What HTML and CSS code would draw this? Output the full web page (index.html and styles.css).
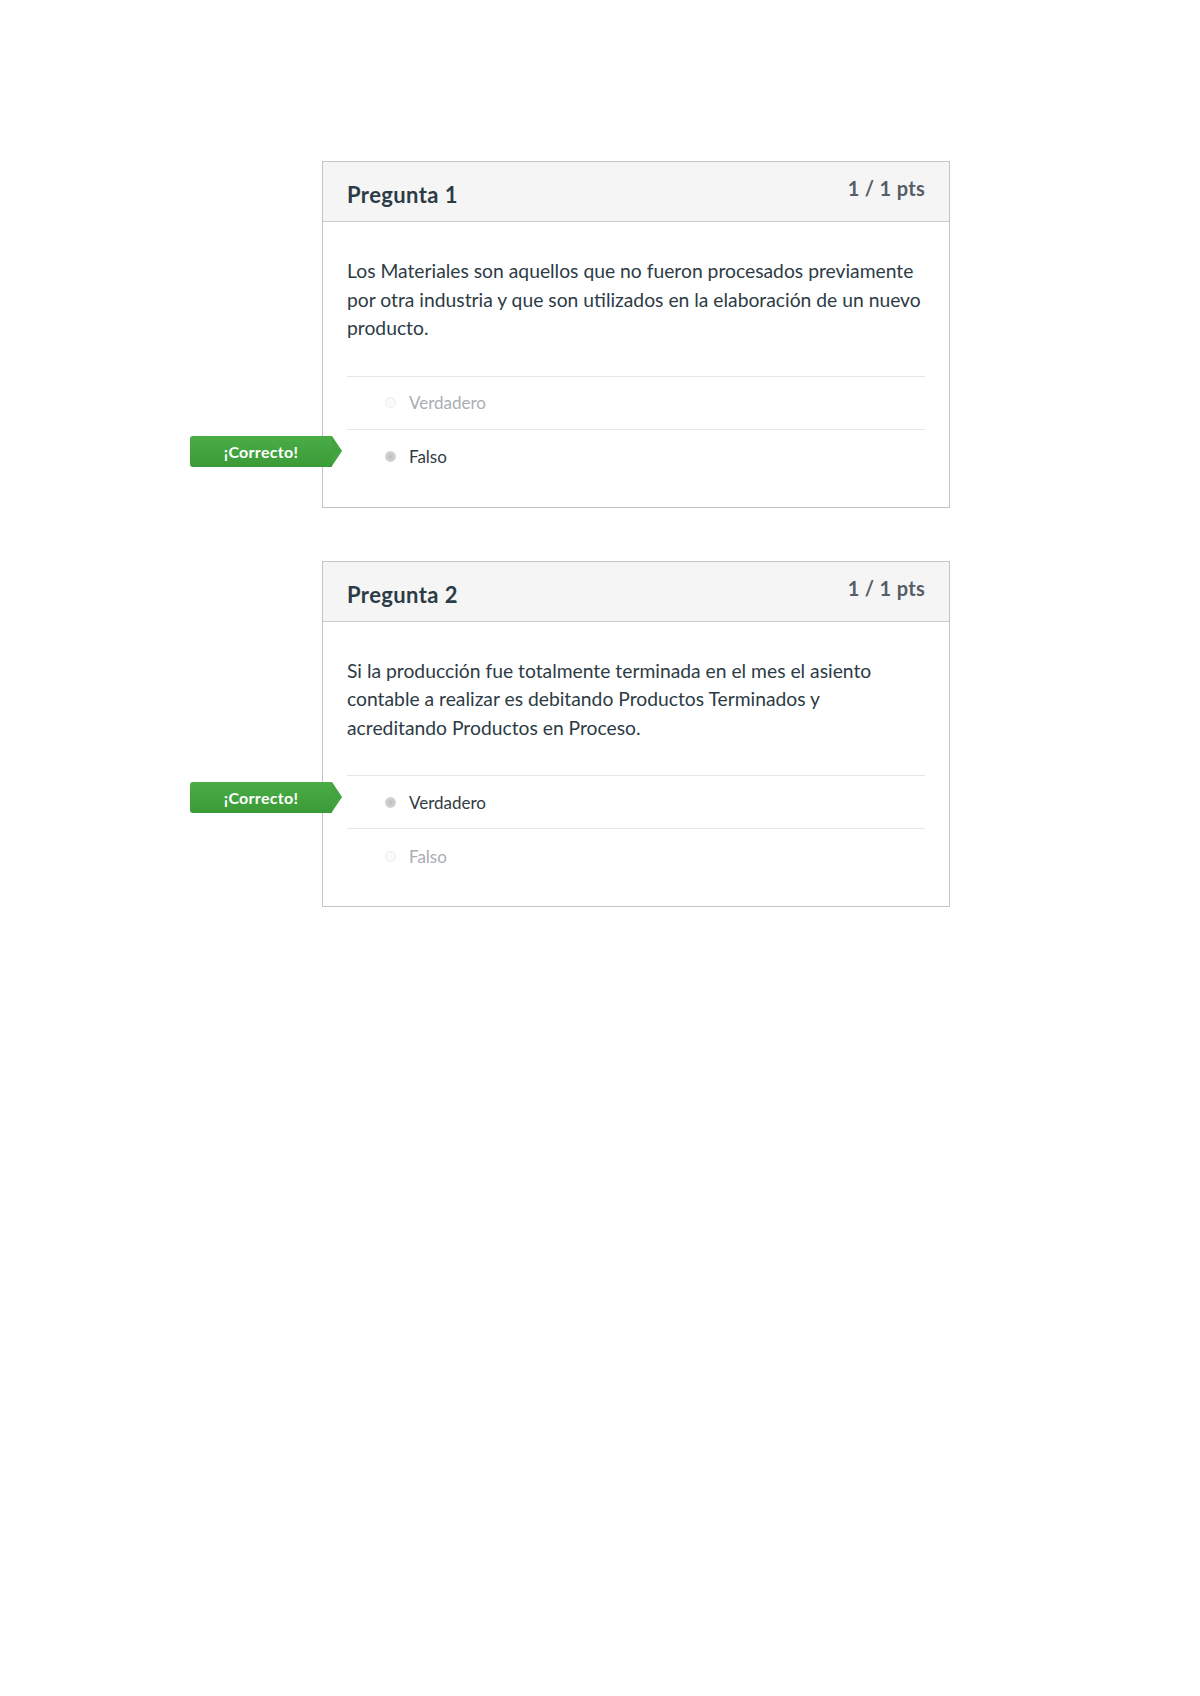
FILE: index.html
```html
<!DOCTYPE html>
<html lang="es">
<head>
<meta charset="utf-8">
<title>Preguntas</title>
<link rel="stylesheet" href="styles.css">
</head>
<body>
<main class="quiz">
  <section class="question">
    <header class="q-header">
      <h2 class="q-title">Pregunta 1</h2>
      <div class="q-points">1 / 1 pts</div>
    </header>
    <div class="q-body">
      <p class="q-text">Los Materiales son aquellos que no fueron procesados previamente por otra industria y que son utilizados en la elaboración de un nuevo producto.</p>
      <ul class="answers">
        <li class="answer"><span class="radio"></span><span class="label muted">Verdadero</span></li>
        <li class="answer selected"><span class="badge">¡Correcto!</span><span class="radio checked"></span><span class="label">Falso</span></li>
      </ul>
    </div>
  </section>
  <section class="question">
    <header class="q-header">
      <h2 class="q-title">Pregunta 2</h2>
      <div class="q-points">1 / 1 pts</div>
    </header>
    <div class="q-body">
      <p class="q-text">Si la producción fue totalmente terminada en el mes el asiento contable a realizar es debitando Productos Terminados y<br>acreditando Productos en Proceso.</p>
      <ul class="answers">
        <li class="answer selected"><span class="badge">¡Correcto!</span><span class="radio checked"></span><span class="label">Verdadero</span></li>
        <li class="answer"><span class="radio"></span><span class="label muted">Falso</span></li>
      </ul>
    </div>
  </section>
</main>
</body>
</html>
```
FILE: styles.css
```css
html, body {
  margin: 0;
  padding: 0;
  background: #ffffff;
}
body {
  font-family: Lato, "Open Sans", "Liberation Sans", sans-serif;
  color: #2d3b45;
  width: 1200px;
  min-height: 1696px;
}
.quiz {
  display: flex;
  flex-direction: column;
  gap: 53px;
  padding: 161px 0 0 322px;
}
.question {
  width: 628px;
  box-sizing: border-box;
  border: 1px solid #c4c4c4;
  background: #fff;
}
.q-header {
  display: flex;
  justify-content: space-between;
  align-items: flex-start;
  height: 60px;
  box-sizing: border-box;
  padding: 16px 24px 0 24px;
  background: #f5f5f5;
  border-bottom: 1px solid #c7cdd1;
}
.q-title {
  margin: 5px 0 0 0;
  font-size: 22px;
  line-height: 24px;
  font-weight: 700;
  letter-spacing: 0.4px;
  color: #2d3b45;
}
.q-points {
  font-size: 20px;
  line-height: 20px;
  font-weight: 700;
  letter-spacing: 0.3px;
  color: #555e66;
}
.q-body {
  padding: 35px 22px 23px 24px;
}
.q-text {
  margin: 0 0 33px 0;
  font-size: 19.3px;
  line-height: 28.5px;
  color: #2d3b45;
}
.answers {
  list-style: none;
  margin: 0 2px 0 0;
  padding: 0;
  border-top: 1px solid #e6e6e6;
}
.answer {
  position: relative;
  display: flex;
  align-items: center;
  gap: 13px;
  height: 52px;
  padding-left: 38px;
  border-bottom: 1px solid #e6e6e6;
}
.answer:last-child {
  border-bottom: none;
  height: 54px;
}
.radio {
  width: 11px;
  height: 11px;
  box-sizing: border-box;
  border-radius: 50%;
  border: 1px solid #ececec;
  background: #fafafa;
  flex: none;
}
.radio.checked {
  border-color: #d0d0d0;
  background: radial-gradient(circle, #bdbdbd 0%, #cfcfcf 60%, #dedede 100%);
}
.label {
  font-size: 17px;
  color: #333b42;
}
.label.muted {
  color: #a9aeb2;
}
.badge {
  position: absolute;
  left: -157px;
  top: 6px;
  width: 142px;
  height: 31px;
  box-sizing: border-box;
  display: flex;
  align-items: center;
  justify-content: center;
  background: linear-gradient(#4aad46, #3a9a37);
  border-radius: 3px 0 0 3px;
  color: #ffffff;
  font-size: 16px;
  font-weight: 700;
  letter-spacing: 0.3px;
}
.badge::after {
  content: "";
  position: absolute;
  right: -10px;
  top: 0;
  width: 0;
  height: 0;
  border-top: 15.5px solid transparent;
  border-bottom: 15.5px solid transparent;
  border-left: 10px solid #42a33f;
}
```
